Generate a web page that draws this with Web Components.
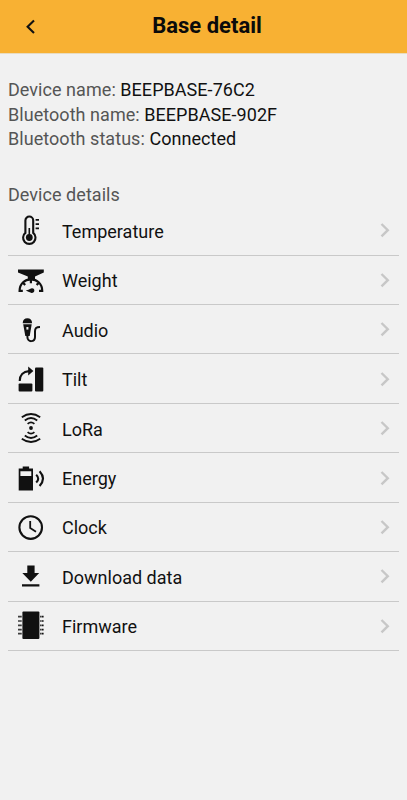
<!DOCTYPE html>
<html lang="en">
<head>
<meta charset="utf-8">
<title>Base detail</title>
<style>
  body { margin: 0; background: #f1f1f1; font-family: Roboto, "Liberation Sans", sans-serif; }
</style>
</head>
<body>
<base-screen>
  <nav-header slot="header">Base detail</nav-header>
  <info-line label="Device name:">BEEPBASE-76C2</info-line>
  <info-line label="Bluetooth name:">BEEPBASE-902F</info-line>
  <info-line label="Bluetooth status:">Connected</info-line>
  <detail-list heading="Device details" slot="details">
    <detail-row icon="temperature">Temperature</detail-row>
    <detail-row icon="weight">Weight</detail-row>
    <detail-row icon="audio">Audio</detail-row>
    <detail-row icon="tilt">Tilt</detail-row>
    <detail-row icon="lora">LoRa</detail-row>
    <detail-row icon="energy">Energy</detail-row>
    <detail-row icon="clock">Clock</detail-row>
    <detail-row icon="download">Download data</detail-row>
    <detail-row icon="firmware">Firmware</detail-row>
  </detail-list>
</base-screen>

<script>
!(function () {
  // all icons share a 32x32 viewBox
  const ICONS = {
    temperature: /* html */ `
      <path d="M10.4 18.9V6.4a3.9 3.9 0 0 1 7.8 0V18.9a6.2 6.2 0 1 1-7.8 0Z" fill="none" stroke="#111" stroke-width="2.1"/>
      <circle cx="14.3" cy="23.5" r="3.4"/><path d="M13.5 14h1.6V22h-1.6ZM20.6 5h3.4V6.7H20.6ZM20.6 9.3h3.4v1.7H20.6ZM20.6 13.6h3.4v1.7H20.6Z"/>`,
    weight: /* html */ `
      <path d="M3 5.6H28.8V8.6L20 12.4V15.5H12.8V12.4L3 8.6Z"/>
      <path d="M7.8 26.8H4.6C4.6 19.8 9.6 15.4 15.9 15.4S27.2 19.8 27.2 26.8H24M15.9 16v3.2M8.1 18.9l2.1 2.1M23.7 18.9l-2.1 2.1" fill="none" stroke="#111" stroke-width="2.2"/>
      <path d="M10.8 26.6Q13.5 25.6 16 24.4A2.4 2.4 0 1 1 16 28.8Q13.5 27.8 10.8 26.6Z"/>`,
    audio: /* html */ `
      <path d="M7.7 10.3C7.7 7.1 9.6 5.3 12.4 5.3S17.1 7.1 17.1 10.3ZM8.2 11.3H16.7L14.7 23.1H10.3Z"/>
      <rect x="11.4" y="14" width="2" height="2.6" fill="#f1f1f1"/>
      <path d="M12.4 22.3V24C12.4 29.6 20 29.4 20 24V18.2C20 15.3 21.2 13.9 25 13.9" fill="none" stroke="#111" stroke-width="2"/>`,
    tilt: /* html */ `
      <rect x="20" y="4.6" width="8.3" height="24" rx="1"/><rect x="3.6" y="20.6" width="13.8" height="8" rx="1"/>
      <path d="M4.7 17.9C4.7 12.3 8.2 8.4 14 8.1" fill="none" stroke="#111" stroke-width="2.1"/><path d="M13.2 3.6 18.4 8.1 13.2 12.4Z"/>`,
    lora: /* html */ `
      <circle cx="16" cy="16" r="1.9"/>
      <g fill="none" stroke="#111" stroke-width="1.8">
        <path d="M12.6 11.9Q16 8.9 19.4 11.9M9.8 8.5Q16 3.5 22.2 8.5M6.8 5.3Q16-1.3 25.2 5.3"/>
        <path d="M12.6 20.1Q16 23.1 19.4 20.1M9.8 23.5Q16 28.5 22.2 23.5M6.8 26.7Q16 33.3 25.2 26.7"/>
      </g>`,
    energy: /* html */ `
      <path fill-rule="evenodd" d="M7.7 4.6H14.1V6.6H18V28.6H3.7V6.6H7.7ZM5.4 9.2V14H16.3V9.2Z"/>
      <path d="M21.2 12.7Q25.2 16.6 21.2 20.6M24.6 9.2Q31.4 16.6 24.6 24" fill="none" stroke="#111" stroke-width="2.1"/>`,
    clock: /* html */ `
      <circle cx="15.7" cy="16.6" r="11.3" fill="none" stroke="#111" stroke-width="2.1"/>
      <path d="M15.2 10.1V17.1L21 20.7" fill="none" stroke="#111" stroke-width="1.8"/>`,
    download: /* html */ `<path d="M12.3 5.4H19.6V13H24.2L15.8 21.7 7.3 13H12.3ZM7 24.2H24.4V26.6H7Z"/>`,
    firmware: /* html */ `
      <rect x="7.4" y="1.6" width="17" height="27.4" rx="1"/>
      <path d="M3.2 6.7H28.6M3.2 11H28.6M3.2 15.3H28.6M3.2 19.6H28.6M3.2 23.7H28.6" stroke="#111" stroke-width="1.7" stroke-dasharray="1.6 .4 1.4 18.6 1.4 .4 1.6"/>`,
  };

  // ********************************************************** <base-screen>
  customElements.define(
    "base-screen",
    class extends HTMLElement {
      constructor() {
        super().attachShadow({ mode: "open" }).innerHTML = /* html */ `
          <style>
            :host { display: flex; flex-direction: column; height: 800px; overflow: hidden; }
            section { padding: 24.4px 8px 0; }
          </style>
          <slot name="header"></slot>
          <section><slot></slot></section>
          <slot name="details"></slot>`;
      }
    }
  );

  // ********************************************************** <nav-header>
  customElements.define(
    "nav-header",
    class extends HTMLElement {
      constructor() {
        super().attachShadow({ mode: "open" }).innerHTML = /* html */ `
          <style>
            :host { display: grid; grid-template-columns: 60px 1fr 60px; align-items: center; height: 53px;
              background: #f8b133; border-bottom: 1px solid #e9dcc0; box-sizing: content-box; color: #0b0b0b; }
            svg { display: block; margin-left: 20px; }
            h1 { margin: 0; padding: 0 0 1px 7px; font-size: 22px; line-height: 26px; font-weight: 700; text-align: center; white-space: nowrap; }
          </style>
          <svg width="20" height="20" viewBox="0 0 20 20"><path d="M14 3.5 7.6 9.8 14 16.1" fill="none" stroke="#111" stroke-width="2.1"/></svg>
          <h1><slot></slot></h1>`;
      }
    }
  );

  // ********************************************************** <info-line>
  customElements.define(
    "info-line",
    class extends HTMLElement {
      constructor() {
        super().attachShadow({ mode: "open" }).innerHTML = /* html */ `
          <style>
            :host { display: block; font-size: 18px; line-height: 24.4px; letter-spacing: .05px; color: #111; white-space: nowrap; }
            span { color: #555; }
          </style>
          <span></span> <slot></slot>`;
      }
      connectedCallback() {
        this.shadowRoot.querySelector("span").textContent = this.getAttribute("label");
      }
    }
  );

  // ********************************************************** <detail-list>
  customElements.define(
    "detail-list",
    class extends HTMLElement {
      constructor() {
        super().attachShadow({ mode: "open" }).innerHTML = /* html */ `
          <style>
            :host { display: block; padding: 31.8px 8px 0; }
            h2 { margin: 0; height: 22.7px; font-size: 18px; line-height: 24px; font-weight: 400; letter-spacing: .05px; color: #555; }
          </style>
          <h2></h2>
          <slot></slot>`;
      }
      connectedCallback() {
        this.shadowRoot.querySelector("h2").textContent = this.getAttribute("heading");
      }
    }
  );

  // ********************************************************** <detail-row>
  customElements.define(
    "detail-row",
    class extends HTMLElement {
      constructor() {
        super().attachShadow({ mode: "open" }).innerHTML = /* html */ `
          <style>
            :host { display: flex; align-items: center; box-sizing: border-box; height: 49.45px; padding: 0 8px 0 7px;
              border-bottom: 1px solid #c9c9c9; font-size: 18px; line-height: 24px; color: #111; }
            .icon { width: 32px; height: 32px; flex: none; fill: #111; }
            .label { flex: 1; padding: 3px 0 0 15px; }
          </style>
          <svg class="icon" viewBox="0 0 32 32">${ICONS[this.getAttribute("icon")] || ""}</svg>
          <div class="label"><slot></slot></div>
          <svg width="12" height="16" viewBox="0 0 12 16"><path d="M2.5 2 8.8 8.2 2.5 14.4" fill="none" stroke="#c7c7c7" stroke-width="2.4"/></svg>`;
      }
    }
  );
})();
</script>
</body>
</html>
